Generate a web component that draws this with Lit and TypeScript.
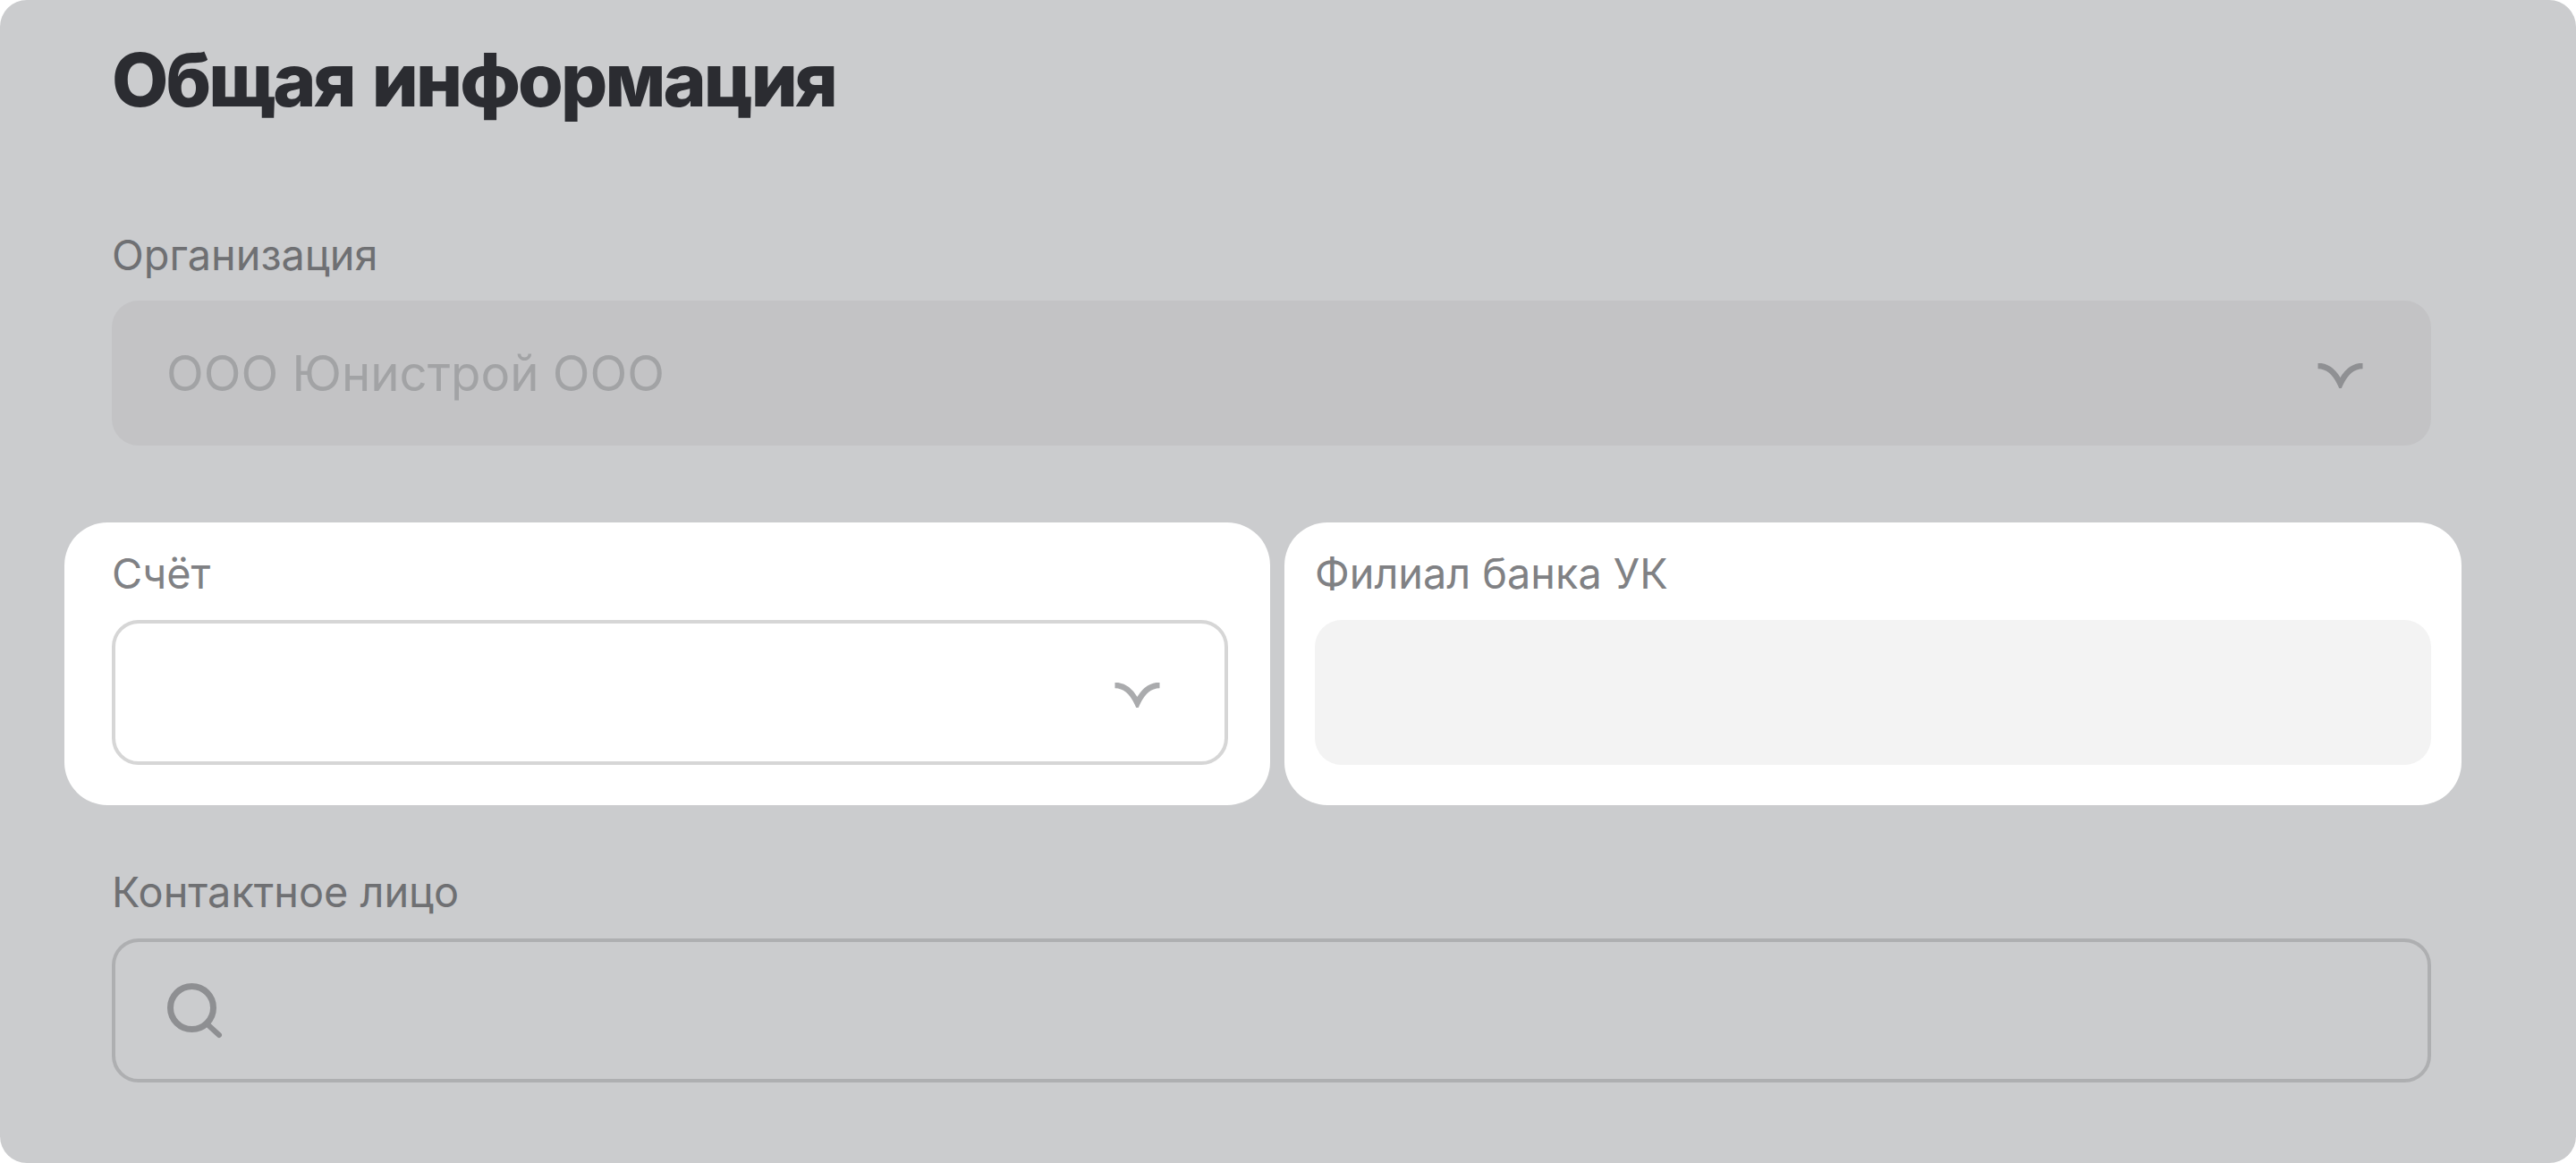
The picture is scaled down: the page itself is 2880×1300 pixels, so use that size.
import {LitElement, html, css, svg} from 'lit';
import {customElement} from 'lit/decorators.js';

const chevron = svg`<path d="M2.5 3C14 3 22 11 27.5 23C33 11 41 3 52.5 3" fill="none" stroke="currentColor" stroke-width="6.5"/>`;

@customElement('app-root')
export class AppRoot extends LitElement {
  static styles = css`
    :host {
      display: block;
      width: 2880px;
      height: 1300px;
      background: #ffffff;
      font-family: Inter, 'Noto Sans', sans-serif;
    }
    .page {
      box-sizing: border-box;
      height: 1300px;
      padding: 44px 162px 0 125px;
      background: #cbccce;
      border-radius: 30px;
      overflow: hidden;
    }
    h1 {
      margin: 0;
      height: 92px;
      font-size: 82px;
      line-height: 92px;
      font-weight: 800;
      letter-spacing: -2.9px;
      word-spacing: 5px;
      color: #2b2c31;
    }
    .label {
      display: block;
      height: 56px;
      font-size: 46.8px;
      line-height: 56px;
      color: #6f7073;
    }
    .org {
      margin-top: 121px;
    }
    .field {
      box-sizing: border-box;
      display: flex;
      align-items: center;
      height: 162px;
      margin-top: 23px;
      padding: 0 74px 0 61px;
      border-radius: 30px;
      font-size: 54.6px;
    }
    .disabled {
      justify-content: space-between;
      background: #c3c3c5;
      color: #a2a3a5;
    }
    .row {
      display: grid;
      grid-template-columns: 1348px 1316px;
      gap: 16px;
      height: 316px;
      margin: 86px -34px 0 -53px;
    }
    .card {
      padding: 29px 47px 0 53px;
      background: #ffffff;
      border-radius: 48px;
    }
    .card + .card {
      padding: 29px 34px 0;
    }
    .card .label {
      color: #808184;
    }
    .card .field {
      margin-top: 24px;
    }
    .select {
      justify-content: flex-end;
      padding: 0 70px;
      border: 4px solid #d6d6d6;
      color: #aaabad;
    }
    .readonly {
      background: #f3f3f3;
    }
    .contact {
      margin-top: 69px;
    }
    .search {
      height: 161px;
      margin-top: 24px;
      padding: 0 58px;
      border: 4px solid #aeafb1;
      color: #8e8f92;
    }
    .chevron {
      display: block;
      width: 55px;
      height: 28px;
      margin-top: 6px;
      color: #8f9093;
    }
    .select .chevron {
      color: inherit;
    }
    .search svg {
      display: block;
      width: 62px;
      height: 62px;
    }
  `;

  render() {
    return html`
      <div class="page">
        <h1>Общая информация</h1>

        <div class="org">
          <span class="label">Организация</span>
          <div class="field disabled">
            <span>ООО Юнистрой ООО</span>
            <svg class="chevron" viewBox="0 0 55 28">${chevron}</svg>
          </div>
        </div>

        <div class="row">
          <div class="card">
            <span class="label">Счёт</span>
            <div class="field select">
              <svg class="chevron" viewBox="0 0 55 28">${chevron}</svg>
            </div>
          </div>
          <div class="card">
            <span class="label">Филиал банка УК</span>
            <div class="field readonly"></div>
          </div>
        </div>

        <div class="contact">
          <span class="label">Контактное лицо</span>
          <div class="field search">
            <svg viewBox="0 0 62 62">
              <circle cx="27.5" cy="27.5" r="24" fill="none" stroke="currentColor" stroke-width="7"/>
              <path d="M46 47L58 58" fill="none" stroke="currentColor" stroke-width="6" stroke-linecap="round"/>
            </svg>
          </div>
        </div>
      </div>
    `;
  }
}
